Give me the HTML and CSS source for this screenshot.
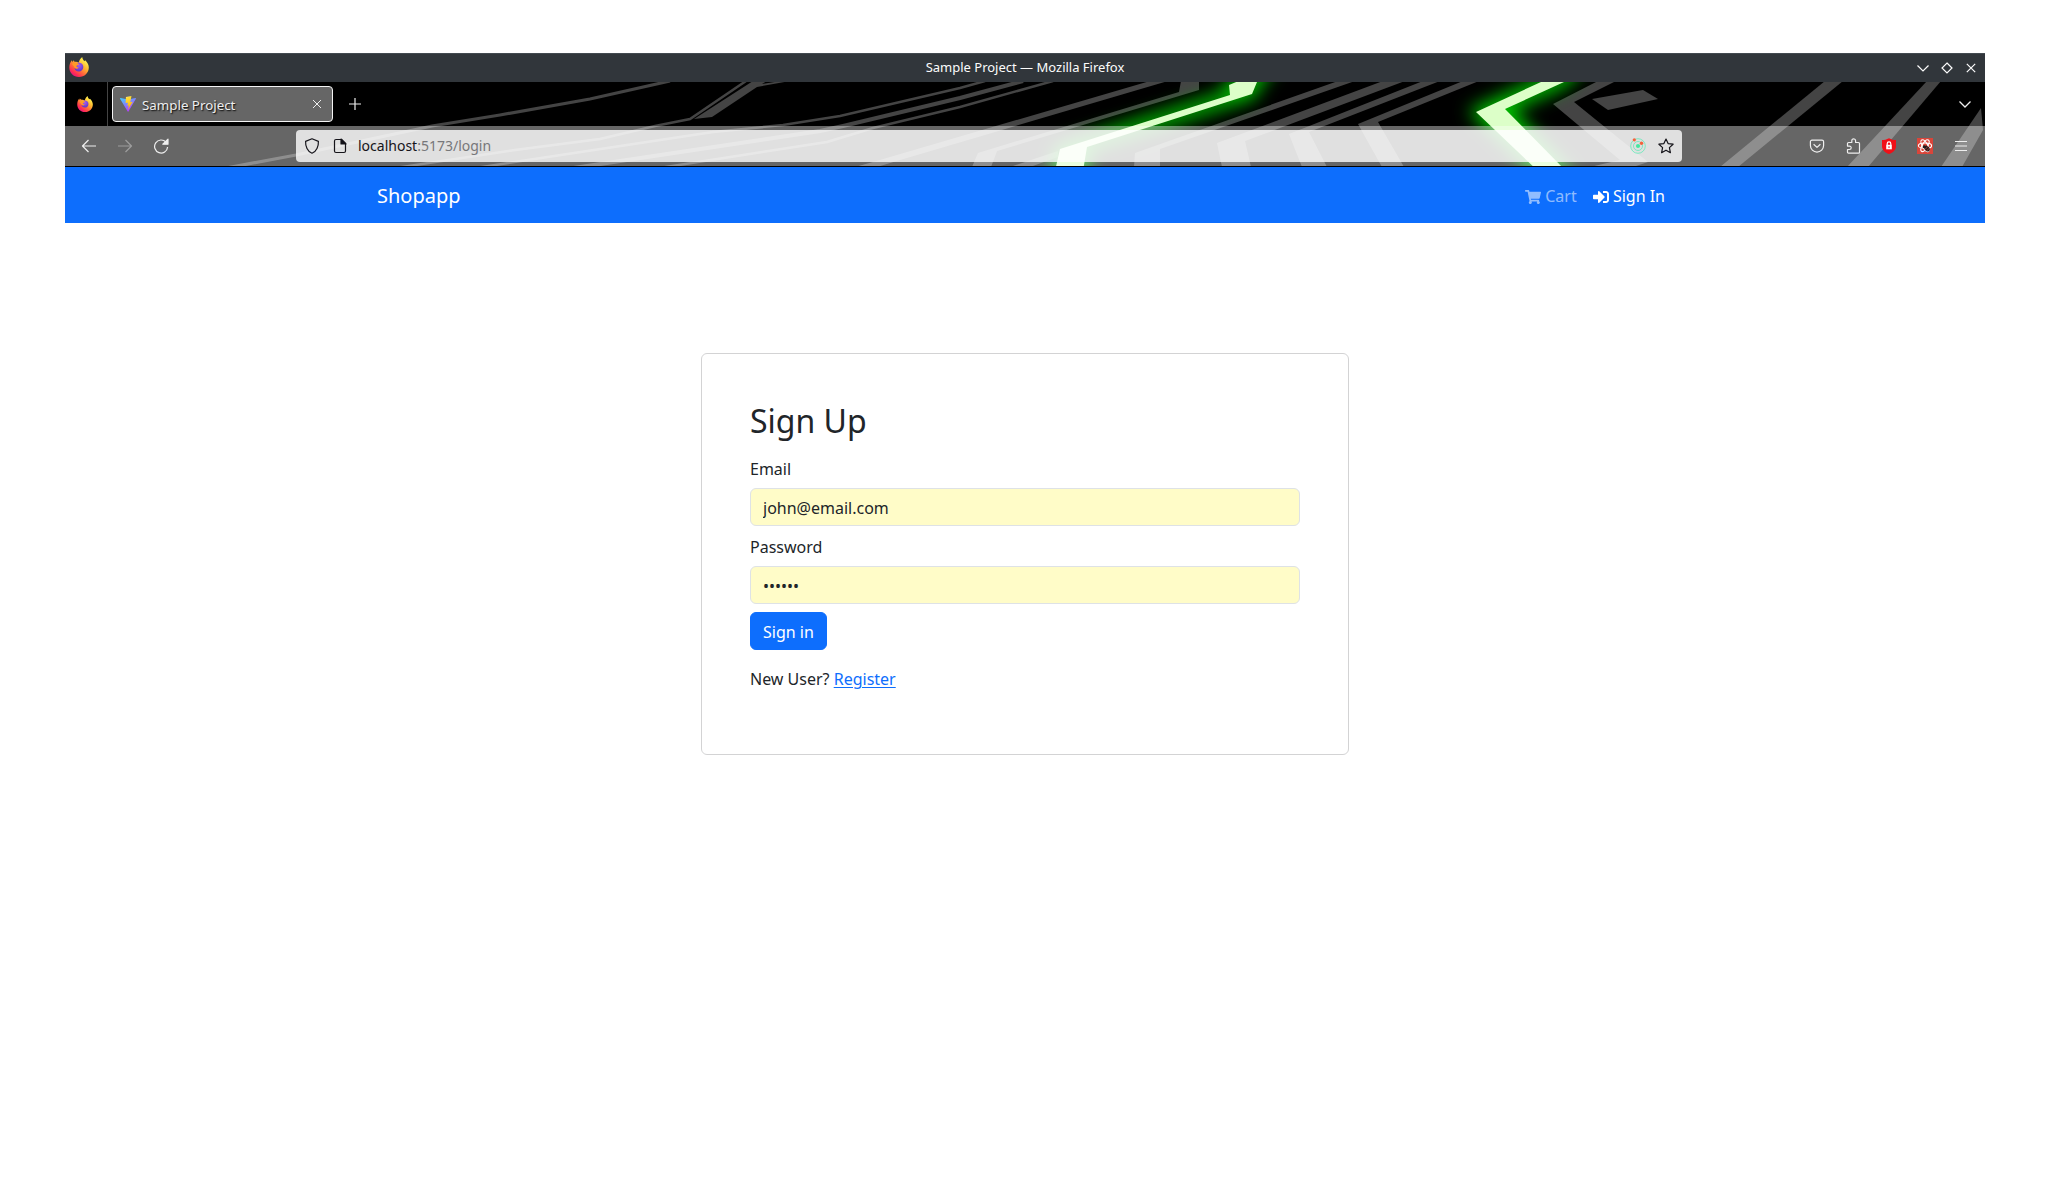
FILE: index.html
```html
<!DOCTYPE html>
<html lang="en">
<head>
<meta charset="utf-8">
<title>Sample Project</title>
<link rel="stylesheet" href="styles.css">
</head>
<body>
<svg class="defs" aria-hidden="true">
  <defs>
    <linearGradient id="flame" x1=".85" y1=".1" x2=".2" y2=".95">
      <stop offset=".05" stop-color="#fff44f"/><stop offset=".38" stop-color="#ffb02e"/><stop offset=".62" stop-color="#ff6a3a"/><stop offset=".85" stop-color="#ff2a55"/><stop offset="1" stop-color="#e31587"/>
    </linearGradient>
    <radialGradient id="globe" cx=".5" cy=".3" r=".7">
      <stop offset="0" stop-color="#a45bf0"/><stop offset="1" stop-color="#5b35c9"/>
    </radialGradient>
    <linearGradient id="viteA" x1="0" y1="0" x2=".6" y2="1"><stop offset="0" stop-color="#41d1ff"/><stop offset="1" stop-color="#bd34fe"/></linearGradient>
    <linearGradient id="viteB" x1=".4" y1="0" x2=".6" y2="1"><stop offset="0" stop-color="#ffea83"/><stop offset=".1" stop-color="#ffdd35"/><stop offset="1" stop-color="#ffa800"/></linearGradient>
    <symbol id="firefox" viewBox="0 0 20 20">
      <path fill="url(#flame)" d="M10 20C4.500 20 .3 15.800.3 10.500.3 7.500 1.300 5.200 2.800 3.200L3.400 5.100 4.800 3.300 5.700 5C7 4.600 8.500 4.900 9.700 5.600 10.200 3.500 11.300 1.500 13.200.1 13.400 2 14.300 3 15.300 4.200L16.200 3.300C18.500 5.400 19.800 7.800 19.800 10.500 19.800 15.800 15.500 20 10 20Z"/>
      <path fill="url(#globe)" d="M10.500 5.700C13 6 14.500 8 14.300 10.300 14.100 12.900 12.200 14.500 10 14.500 7.500 14.500 5.700 13 5.500 11 7 12 8.600 11.800 9.700 10.800 8.300 10.500 7.200 10.200 7.300 9 7.400 8 9.300 8.300 10 7.300 9.200 6.700 8.500 6.300 7.600 6.200 8.600 5.600 9.500 5.500 10.500 5.700Z"/>
      <path fill="#ff9a27" d="M3 7C4.300 5.600 6.500 5.500 8 6.300L10 7.300C9.300 8.300 7.400 8 7.200 9.100 7.200 10.400 8.500 10.500 9.700 10.800 8 12.200 5.500 11.500 4.800 9.300Z"/>
    </symbol>
  </defs>
</svg>

<div class="window">
  <header class="titlebar">
    <svg class="app-icon" width="20" height="20"><use href="#firefox"/></svg>
    <span class="window-title">Sample Project — Mozilla Firefox</span>
    <div class="window-controls">
      <svg viewBox="0 0 24 24"><path d="M6.500 9.500 12 15 17.500 9.500"/></svg>
      <svg viewBox="0 0 24 24"><path d="M12 7 17 12 12 17 7 12Z"/></svg>
      <svg viewBox="0 0 24 24"><path d="M7.800 7.800 16.200 16.200M16.200 7.800 7.800 16.200"/></svg>
    </div>
  </header>

  <div class="chrome">
    <svg class="theme-art" viewBox="65 82 1920 85" width="1920" height="85">
      <defs>
        <filter id="glow" filterUnits="userSpaceOnUse" x="950" y="30" width="750" height="200"><feGaussianBlur stdDeviation="9"/></filter>
        <g id="beams">
          <path d="M1055 171 1060 149 1230 95 1229 85 1270 68 1257 82 1252 94 1087 147 1083 171Z"/>
          <path d="M1538 171 1476 112 1580 64 1564 82 1505 109 1566 171Z"/>
        </g>
      </defs>
      <g class="trace">
        <path d="M221 169 296 155 432 126 500 115 590 99 670 81" stroke-width="3.200"/>
        <path d="M389 169 515 150 600 139 655 126 690 119 746 81" stroke-width="2.500"/>
        <path d="M469 169 713 132 783 125 840 116 960 88 985 81" stroke-width="2.500"/>
        <path d="M567 169 820 131 843 126 960 98 1023 81" stroke-width="4"/>
        <path d="M653 169 827 142 873 128 960 107 1053 81" stroke-width="2.500"/>
      </g>
      <g class="band">
        <path d="M694 119 712 117 757 87 790 81 781 81 762 84 767 81 753 81Z"/>
        <path d="M855 167 880 160 1150 81 1168 81 900 160 877 167Z"/>
        <path d="M972 167 978 153 1179 92 1181 81 1199 81 1199 90 997 151 991 167Z"/>
        <path d="M1010 167 1058 151 1058 157 1030 167Z"/>
        <path d="M1134 167 1135 153 1338 81 1355 81 1160 149 1160 167Z"/>
        <path d="M1222 167 1217 143 1383 81 1405 81 1245 141 1251 167Z"/>
        <path d="M1302 167 1289 134 1423 81 1440 81 1309 132 1327 167Z"/>
        <path d="M1382 167 1358 124 1463 81 1479 81 1378 122 1404 167Z"/>
        <path d="M1590 167 1620 160 1553 104 1598 81 1616 81 1574 102 1648 162 1633 167Z"/>
        <path d="M1592 99 1643 90 1658 99 1608 110Z"/>
        <path d="M1720 167 1825 81 1843 81 1738 167Z"/>
        <path d="M1847 167 1927 81 1941 81 1868 167Z"/>
        <path d="M1941 167 1981 108 1983 130 1962 167Z"/>
      </g>
      <use href="#beams" class="beam-glow" filter="url(#glow)"/>
      <use href="#beams" class="beam-core"/>
    </svg>

    <div class="tabstrip">
      <div class="pinned-tab"><svg width="16" height="16"><use href="#firefox"/></svg></div>
      <div class="tab">
        <svg width="16" height="16" viewBox="0 0 32 32">
          <path fill="url(#viteA)" d="M31.800 5.500 16.900 31.100C16.600 31.700 15.700 31.700 15.400 31.100L.1 5.500C-.2 4.900.3 4.100 1 4.200L16 6.900 30.900 4.200C31.600 4.100 32.200 4.900 31.800 5.500Z"/>
          <path fill="url(#viteB)" d="M22.900 0 11.900 2.200 11.200 14.200 16 13.500 14.500 19.500 17.800 19 15.500 28 25.500 11.500 20.500 12.300Z"/>
        </svg>
        <span class="tab-label">Sample Project</span>
        <svg class="tab-close" width="10" height="10" viewBox="0 0 10 10"><path d="M1 1 9 9M9 1 1 9"/></svg>
      </div>
      <svg class="new-tab" width="14" height="14" viewBox="0 0 14 14"><path d="M7 1V13M1 7H13"/></svg>
      <svg class="all-tabs" width="14" height="14" viewBox="0 0 14 14"><path d="M1.500 4.500 7 10 12.500 4.500"/></svg>
    </div>

    <div class="toolbar">
      <div class="tool"><svg viewBox="0 0 16 16"><path d="M15 8H1.500M7.500 2 1.500 8 7.500 14"/></svg></div>
      <div class="tool tool-off"><svg viewBox="0 0 16 16"><path d="M1 8H14.500M8.500 2 14.500 8 8.500 14"/></svg></div>
      <div class="tool"><svg viewBox="0 0 16 16"><path d="M13 4.200A6.500 6.500 0 1 0 14.600 9"/><path class="solid" d="M15 1.200V6.200H9.800Z"/></svg></div>
      <div class="urlbar">
        <div class="url-icon"><svg viewBox="0 0 16 16"><path d="M8 .8 14.400 3.400C14.700 8 12.500 13.600 8 15.200 3.500 13.600 1.300 8 1.600 3.400Z"/></svg></div>
        <div class="url-icon"><svg viewBox="0 0 16 16"><path d="M4 1.500H9.500L13.500 5.500V13A1.500 1.500 0 0 1 12 14.500H4A1.500 1.500 0 0 1 2.500 13V3A1.500 1.500 0 0 1 4 1.500Z"/><path class="solid" d="M9 1 14 6H9Z"/></svg></div>
        <span class="url">localhost<span class="url-path">:5173/login</span></span>
        <div class="url-icon radar"><svg viewBox="0 0 16 16"><circle cx="8" cy="8" r="7.300"/><circle cx="8" cy="8" r="4.500"/><circle class="radar-hub" cx="8" cy="8" r="2.100"/><circle class="radar-dot" cx="4.300" cy="1.800" r="1.600"/><circle class="radar-dot" cx="11.500" cy="5.200" r="1.700"/></svg></div>
        <div class="url-icon"><svg viewBox="0 0 16 16"><path d="M8 1 10.100 5.600 15.100 6.200 11.400 9.600 12.400 14.700 8 12.200 3.600 14.700 4.600 9.600.9 6.200 5.900 5.600Z"/></svg></div>
      </div>
      <div class="tool"><svg viewBox="0 0 16 16"><path d="M3 2.200H13A1.600 1.600 0 0 1 14.600 3.800V7.500A6.600 6.600 0 0 1 1.400 7.500V3.800A1.600 1.600 0 0 1 3 2.200ZM4.600 6.200 8 9.400 11.400 6.200"/></svg></div>
      <div class="tool"><svg viewBox="0 0 16 16"><path d="M6.800 4.500V2.700A1.900 1.900 0 0 1 10.600 2.700V4.500H13.500A1 1 0 0 1 14.500 5.500V14.200A1 1 0 0 1 13.500 15.200H3.500A1 1 0 0 1 2.500 14.200V11.500H4.500A1.700 1.700 0 0 0 4.500 8.100H2.500V5.500A1 1 0 0 1 3.500 4.500Z"/></svg></div>
      <div class="tool"><svg viewBox="0 0 16 16"><path fill="#f01018" stroke="none" d="M8 .2C10.300 1.500 12.700 2 15 2.100V8C15 12.300 12 14.600 8 16 4 14.600 1 12.300 1 8V2.100C3.300 2 5.700 1.500 8 .2Z"/><path fill="none" stroke="#fff" d="M6.200 7V5.700A1.800 1.800 0 0 1 9.800 5.700V7"/><path fill="#fff" stroke="none" d="M5.200 6.800H10.800V11.300H5.200Z"/><path fill="#f01018" stroke="none" d="M7.500 8.200H8.500V10H7.500Z"/></svg></div>
      <div class="tool"><svg viewBox="0 0 16 16"><path fill="#d9453a" stroke="none" d="M0 0H16V16H0Z"/><g fill="none" stroke="#fff" stroke-width="1.100"><ellipse cx="8" cy="7.700" rx="6.600" ry="2.700"/><ellipse cx="8" cy="7.700" rx="6.600" ry="2.700" transform="rotate(60 8 7.700)"/><ellipse cx="8" cy="7.700" rx="6.600" ry="2.700" transform="rotate(-60 8 7.700)"/></g><g fill="#201d1d" stroke="none"><ellipse cx="10" cy="10.500" rx="3.200" ry="2.400" transform="rotate(50 10 10.500)"/><circle cx="7.200" cy="8.700" r="1.500"/></g><path stroke="#d9453a" stroke-width=".7" d="M8 11.500 11 8.200M9.500 13 12.200 10.200"/></svg></div>
      <div class="tool"><svg viewBox="0 0 16 16"><path d="M2 3.500H14M2 8H14M2 12.500H14"/></svg></div>
    </div>
  </div>

  <nav class="navbar">
    <div class="container">
      <a class="brand">Shopapp</a>
      <div class="nav-links">
        <a class="nav-link muted"><svg width="16" height="16" viewBox="0 0 576 512"><path d="M528.120 301.319l47.273-208C578.806 78.301 567.391 64 551.990 64H159.208l-9.166-44.810C147.758 8.021 137.930 0 126.529 0H24C10.745 0 0 10.745 0 24v16c0 13.255 10.745 24 24 24h69.883l70.248 343.435C147.325 417.100 136 435.222 136 456c0 30.928 25.072 56 56 56s56-25.072 56-56c0-15.674-6.447-29.835-16.824-40h209.647C430.447 426.165 424 440.326 424 456c0 30.928 25.072 56 56 56s56-25.072 56-56c0-22.172-12.888-41.332-31.579-50.405l5.517-24.276c3.413-15.018-8.002-29.319-23.403-29.319H218.117l-6.545-32h293.145c11.206 0 20.920-7.754 23.403-18.681z"/></svg> Cart</a>
        <a class="nav-link"><svg width="16" height="16" viewBox="0 0 512 512"><path d="M416 448h-84c-6.600 0-12-5.400-12-12v-40c0-6.600 5.400-12 12-12h84c17.700 0 32-14.300 32-32V160c0-17.700-14.300-32-32-32h-84c-6.600 0-12-5.400-12-12V76c0-6.600 5.400-12 12-12h84c53 0 96 43 96 96v192c0 53-43 96-96 96zm-47-209L201 71c-15-15-41-4.500-41 17v96H24c-13.300 0-24 10.700-24 24v96c0 13.300 10.700 24 24 24h136v96c0 21.500 26 32 41 17l168-168c9.300-9.400 9.300-24.600 0-34z"/></svg> Sign In</a>
      </div>
    </div>
  </nav>

  <main class="page">
    <form class="card">
      <h1 class="card-title">Sign Up</h1>
      <label class="label" for="email">Email</label>
      <input class="field" id="email" type="text" value="john@email.com">
      <label class="label" for="password">Password</label>
      <input class="field" id="password" type="text" value="••••••">
      <button class="submit" type="button">Sign in</button>
      <p class="register">New User? <a class="link">Register</a></p>
    </form>
  </main>
</div>
</body>
</html>
```
FILE: styles.css
```css
* { box-sizing: border-box; }

body {
  margin: 0;
  padding: 53px 65px 0;
  background: #fff;
  color: #212529;
  font: 16px/24px "Noto Sans", sans-serif;
}

.defs { position: absolute; width: 0; height: 0; }
svg { display: block; flex: none; }

/* Title bar */
.titlebar {
  display: grid;
  grid-template-columns: 1fr auto 1fr;
  align-items: center;
  height: 29px;
  padding: 0 3px 0 4px;
  border-top: 1px solid #434a50;
  background: #31363b;
  color: #fcfcfc;
}
.app-icon { margin-bottom: 2px; }
.window-title { padding: 0 1px 2px 0; font-size: 13px; line-height: 18px; }
.window-controls { display: flex; justify-content: flex-end; margin: 0 -1px 1px 0; }
.window-controls svg { width: 24px; height: 24px; fill: none; stroke: #fcfcfc; stroke-width: 1.2; }

/* Themed browser chrome */
.chrome {
  position: relative;
  overflow: hidden;
  border-bottom: 1px solid #000;
  background: #000;
}
.theme-art { position: absolute; top: 0; left: 0; }
.trace { fill: none; stroke: #444; }
.band { fill: #444; }
.beam-glow { fill: #00c800; stroke: #00c800; stroke-width: 9; }
.beam-core { fill: #dcffc8; }

.tabstrip {
  position: relative;
  display: flex;
  align-items: center;
  height: 44px;
  padding-right: 13px;
}
.pinned-tab {
  display: flex;
  align-items: center;
  width: 43px;
  height: 44px;
  padding: 0 0 1px 12px;
  border-right: 1px solid #444;
}
.tab {
  display: flex;
  align-items: center;
  width: 221px;
  height: 36px;
  margin-left: 4px;
  padding: 0 10px 1px 7px;
  border: 1px solid #f4f4f4;
  border-radius: 4px;
  background: #666;
}
.tab-label {
  flex: 1;
  margin-left: 6px;
  padding-top: 3px;
  color: #eee;
  font-size: 13.33px;
  line-height: 18px;
  text-shadow: 1px 1px 1.5px #000;
}
.tab-close, .new-tab, .all-tabs { fill: none; stroke: #eee; stroke-width: 1; }
.new-tab { margin-left: 14.5px; stroke-width: 1.2; }
.all-tabs { margin-left: auto; stroke-width: 1.3; }

.toolbar {
  position: relative;
  display: flex;
  align-items: center;
  height: 40px;
  padding: 0 6px;
  background: rgba(255, 255, 255, .4);
}
.tool { display: flex; justify-content: center; width: 36px; }
.tool svg, .url-icon svg { width: 16px; height: 16px; fill: none; stroke: #eee; stroke-width: 1.2; stroke-linejoin: round; }
.tool-off { opacity: .4; }
.tool .solid { fill: #eee; }

.urlbar {
  flex: 1;
  display: flex;
  align-items: center;
  height: 32px;
  margin: 0 117px;
  padding: 0 2px;
  border-radius: 4px;
  background: rgba(255, 255, 255, .8);
}
.url-icon { display: flex; justify-content: center; width: 28px; }
.url-icon svg { stroke: #15141a; }
.url-icon .solid { fill: #15141a; }
.url { flex: 1; padding: 0 0 1px 4px; color: #15141a; font-size: 14px; line-height: 20px; }
.url-path { color: #77777a; }
.radar svg { stroke: #7ce8c0; stroke-width: 1; }
.radar .radar-hub { fill: #48e6a0; stroke: none; }
.radar .radar-dot { fill: #f4623a; stroke: none; }

/* Shop page */
.navbar { height: 56px; background: #0d6efd; color: #fff; }
.container {
  display: flex;
  align-items: center;
  justify-content: space-between;
  width: 1320px;
  height: 56px;
  margin: 0 auto;
  padding: 1px 12px 0;
}
.brand { font-size: 20px; line-height: 30px; }
.nav-links { display: flex; }
.nav-link { padding: 9px 8px 8px; white-space: pre; }
.nav-link svg { display: inline-block; margin-bottom: 2px; vertical-align: middle; fill: currentColor; }
.muted { color: rgba(255, 255, 255, .55); }

.page { display: flex; justify-content: center; padding-top: 130px; }
.card {
  width: 648px;
  padding: 48px;
  border: 1px solid #d3d3d4;
  border-radius: 6px;
}
.card-title { margin: 0 0 17px; font-size: 32px; font-weight: 400; line-height: 38.4px; }
.label { display: block; margin: 8px 0 7px; }
.field {
  display: block;
  width: 100%;
  height: 38px;
  margin-bottom: 9px;
  padding: 7px 12px 5px;
  border: 1px solid #dee2e6;
  border-radius: 6px;
  background: #fffcc8;
  color: #212529;
  font: inherit;
}
.submit {
  display: block;
  height: 38px;
  margin-top: -1px;
  padding: 7px 12px 5px;
  border: 1px solid #0d6efd;
  border-radius: 6px;
  background: #0d6efd;
  color: #fff;
  font: inherit;
}
.register { margin: 0; padding: 17px 0 15px; }
.link { color: #0d6efd; text-decoration: underline; text-underline-offset: 2px; }
```
